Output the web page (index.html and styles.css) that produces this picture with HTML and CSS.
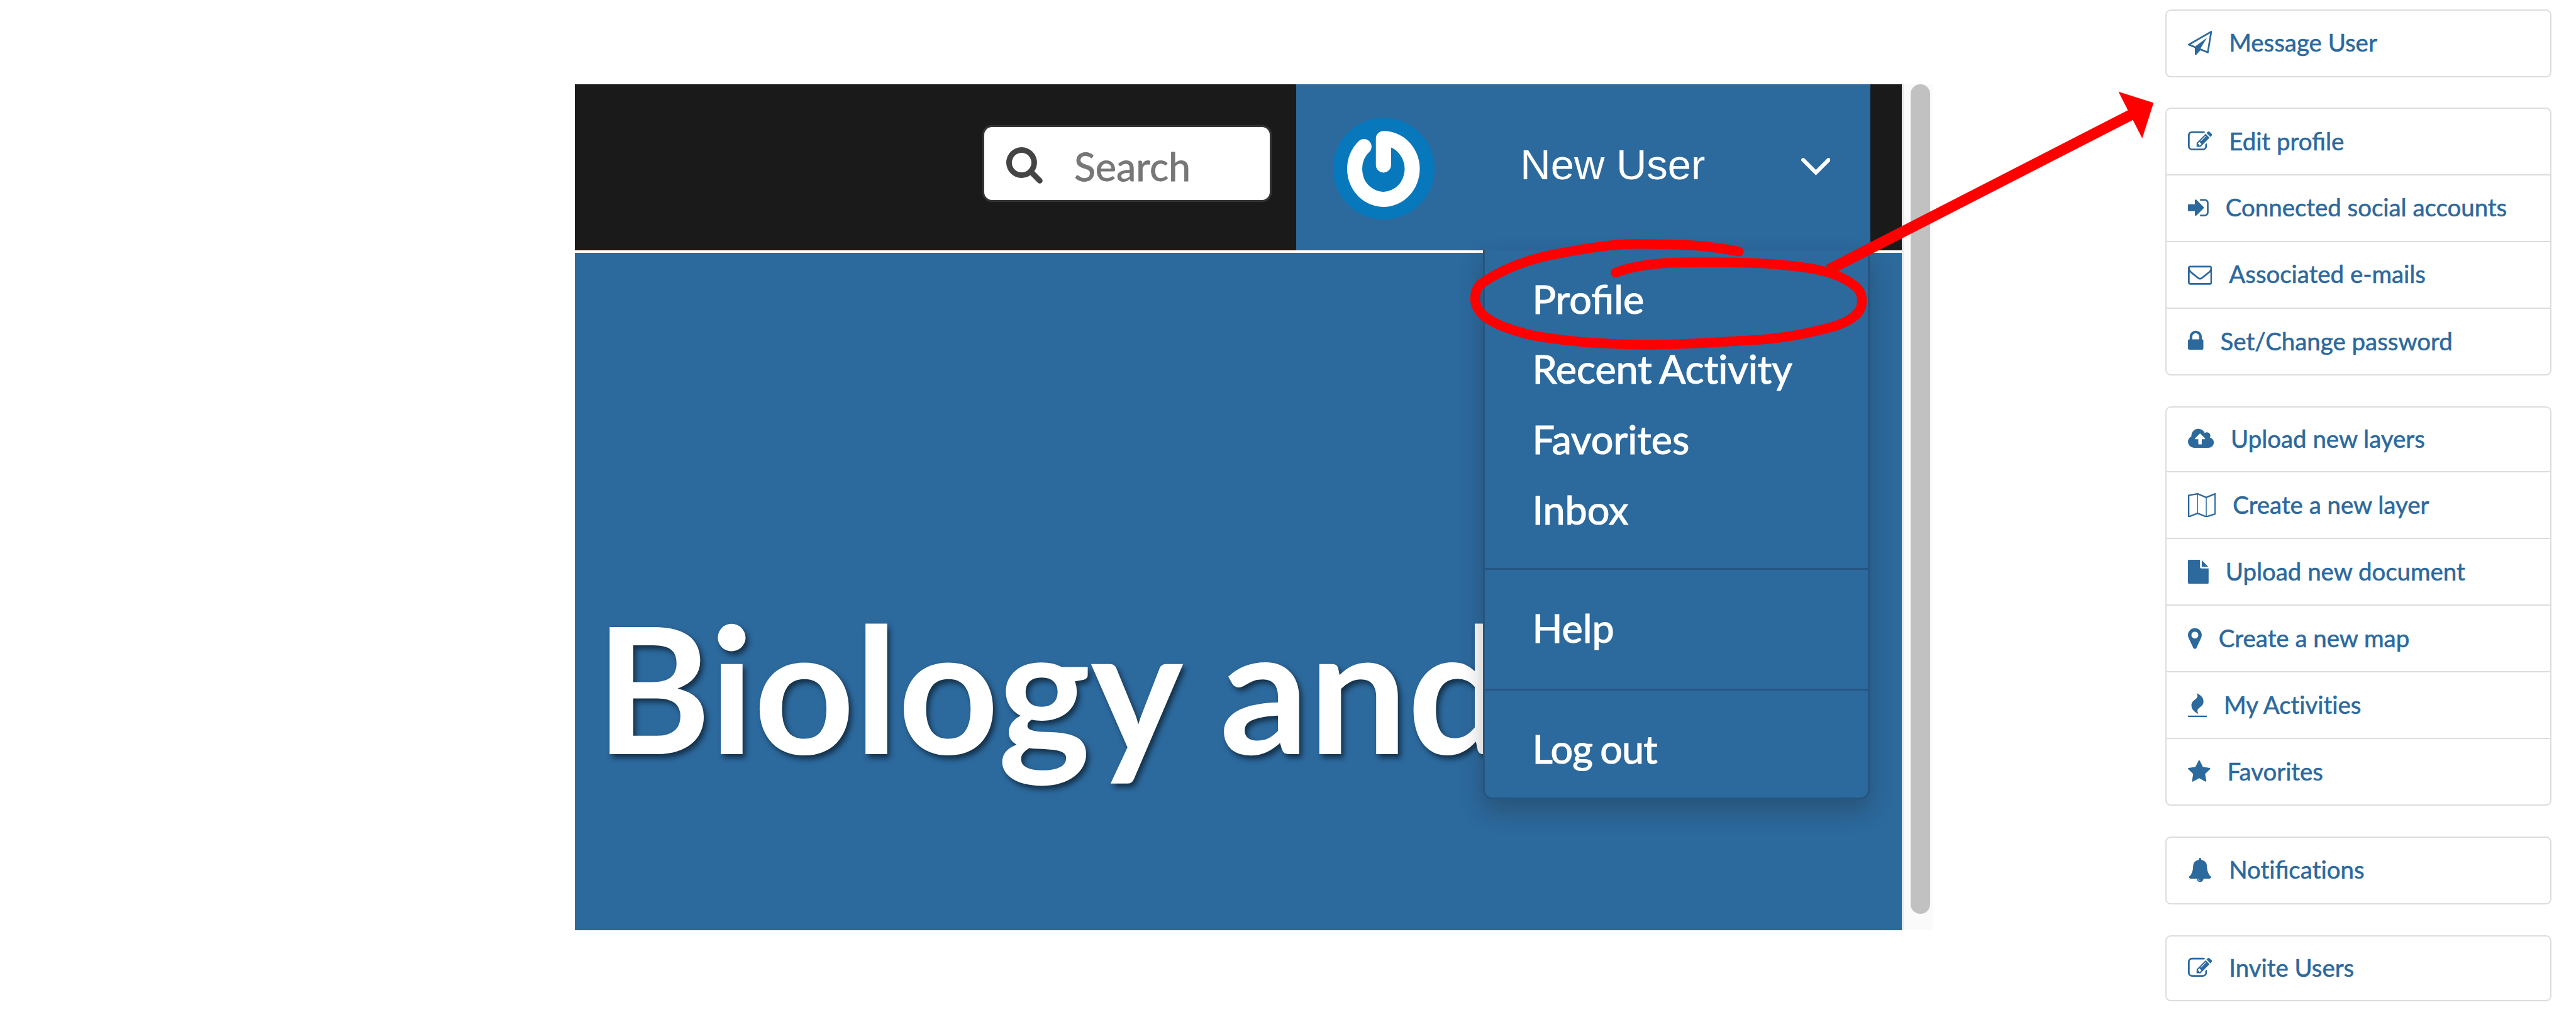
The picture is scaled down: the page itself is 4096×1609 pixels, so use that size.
FILE: index.html
```html
<!DOCTYPE html>
<html lang="en">
<head>
<meta charset="utf-8">
<title>User profile menu</title>
<link rel="stylesheet" href="styles.css">
</head>
<body>
<svg class="sprite" aria-hidden="true">
  <symbol id="send-o" viewBox="0 0 1792 1792"><path d="M1764 11q33 24 27 64l-256 1536q-5 29-32 45-14 8-31 8-11 0-24-5l-527-215-298 327q-18 21-47 21-14 0-23-4-19-7-30-23.500t-11-36.500v-452l-472-193q-37-14-40-55-3-39 32-59l1664-960q35-21 68 2zm-342 1499l221-1323-1434 827 336 137 863-639-478 797z"/></symbol>
  <symbol id="edit" viewBox="0 0 1792 1792"><path d="M888 1184l116-116-152-152-116 116v56h96v96h56zm440-720q-16-16-33 1l-350 350q-17 17-1 33t33-1l350-350q17-17 1-33zm80 594v190q0 119-84.500 203.500t-203.500 84.500h-832q-119 0-203.500-84.500t-84.500-203.500v-832q0-119 84.500-203.500t203.500-84.500h832q63 0 117 25 15 7 18 23 3 17-9 29l-49 49q-14 14-32 8-23-6-45-6h-832q-66 0-113 47t-47 113v832q0 66 47 113t113 47h832q66 0 113-47t47-113v-126q0-13 9-22l64-64q15-15 35-7t20 29zm-96-738l288 288-672 672h-288v-288zm444 132l-92 92-288-288 92-92q28-28 68-28t68 28l152 152q28 28 28 68t-28 68z"/></symbol>
  <symbol id="sign-in" viewBox="128 0 1536 1792"><path d="M1312 896q0 26-19 45l-544 544q-19 19-45 19t-45-19-19-45v-288h-448q-26 0-45-19t-19-45v-384q0-26 19-45t45-19h448v-288q0-26 19-45t45-19 45 19l544 544q19 19 19 45zm352-352v704q0 119-84.500 203.500t-203.500 84.500h-320q-13 0-22.500-9.500t-9.500-22.500q0-4-1-20t-.5-26.500 3-23.500 10-19.500 20.500-6.500h320q66 0 113-47t47-113v-704q0-66-47-113t-113-47h-312l-11.500-1-11.500-3-8-5.500-7-9-2-13.500q0-4-1-20t-.5-26.500 3-23.500 10-19.500 20.500-6.500h320q119 0 203.500 84.500t84.500 203.500z"/></symbol>
  <symbol id="mail" viewBox="0 0 1792 1792"><path d="M1664 1504v-768q-32 36-69 66-268 206-426 338-51 43-83 67t-86.500 48.500-102.500 24.500h-2q-48 0-102.500-24.500t-86.500-48.500-83-67q-158-132-426-338-37-30-69-66v768q0 13 9.500 22.500t22.500 9.500h1472q13 0 22.500-9.500t9.500-22.500zm0-1051v-24.500l-.5-13-3-12.500-5.500-9-9-7.500-14-2.500h-1472q-13 0-22.500 9.500t-9.500 22.500q0 168 147 284 193 152 401 317 6 5 35 29.500t46 37.500 44.500 31.500 50.500 27.500 43 9h2q20 0 43-9t50.500-27.500 44.500-31.500 46-37.500 35-29.500q208-165 401-317 54-43 100.500-115.500t46.500-131.500zm128-37v1088q0 66-47 113t-113 47h-1472q-66 0-113-47t-47-113v-1088q0-66 47-113t113-47h1472q66 0 113 47t47 113z"/></symbol>
  <symbol id="lock" viewBox="320 0 1152 1792"><path d="M640 768h512v-192q0-106-75-181t-181-75-181 75-75 181v192zm832 96v576q0 40-28 68t-68 28h-960q-40 0-68-28t-28-68v-576q0-40 28-68t68-28h32v-192q0-184 132-316t316-132 316 132 132 316v192h32q40 0 68 28t28 68z"/></symbol>
  <symbol id="cloud" viewBox="-64 0 1920 1792"><path d="M1216 864q0-14-9-23l-352-352q-9-9-23-9t-23 9l-351 351q-10 12-10 24 0 14 9 23t23 9h224v352q0 13 9.500 22.500t22.500 9.500h192q13 0 22.500-9.500t9.500-22.500v-352h224q13 0 22.500-9.500t9.500-22.500zm640 288q0 159-112.500 271.500t-271.500 112.500h-1088q-185 0-316.500-131.500t-131.500-316.500q0-130 70-240t188-165q-2-30-2-43 0-212 150-362t362-150q156 0 285.500 87t188.500 231q71-62 166-62 106 0 181 75t75 181q0 76-41 138 130 31 213.500 135.500t83.500 238.500z"/></symbol>
  <symbol id="map" viewBox="0 0 60 52"><g fill="none" stroke="currentColor" stroke-linejoin="round"><path stroke-width="3.200" d="M1.500 4.800 20.800 1.400 39.400 9.200 58.600 1.400V45L39.400 51 20.800 43.500 1.500 51Z"/><path stroke-width="2" d="M20.800 1.400V43.500M39.400 9.200V51"/></g></symbol>
  <symbol id="file" viewBox="128 0 1536 1792"><path d="M1152 512v-472q22 14 36 28l408 408q14 14 28 36h-472zm-128 32q0 40 28 68t68 28h544v1056q0 40-28 68t-68 28h-1344q-40 0-68-28t-28-68v-1600q0-40 28-68t68-28h800v544z"/></symbol>
  <symbol id="marker" viewBox="384 0 1024 1792"><path d="M1152 640q0-106-75-181t-181-75-181 75-75 181 75 181 181 75 181-75 75-181zm256 0q0 109-33 179l-364 774q-16 33-47.500 52t-67.500 19-67.500-19-46.500-52l-365-774q-33-70-33-179 0-212 150-362t362-150 362 150 150 362z"/></symbol>
  <symbol id="fire" viewBox="192 0 1408 1792"><path d="M1600 1696v64q0 13-9.500 22.500t-22.500 9.500h-1344q-13 0-22.500-9.500t-9.500-22.500v-64q0-13 9.500-22.500t22.500-9.500h1344q13 0 22.500 9.500t9.500 22.500zm-256-1056q0 78-24.500 144t-64 112.500-87.500 88-96 77.500-87.500 72-64 81.500-24.500 96.500q0 96 67 224l-4-1 1 1q-90-41-160-83t-138.500-100-113.500-122.500-72.500-150.500-27.500-184q0-78 24.500-144t64-112.500 87.500-88 96-77.500 87.500-72 64-81.500 24.500-96.500q0-94-66-224l3 1-1-1q90 41 160 83t138.500 100 113.500 122.500 72.500 150.500 27.500 184z"/></symbol>
  <symbol id="star" viewBox="64 0 1664 1792"><path d="M1728 647q0 22-26 48l-363 354 86 500q1 7 1 20 0 21-10.500 35.500t-30.500 14.500q-19 0-40-12l-449-236-449 236q-22 12-40 12-21 0-31.500-14.500t-10.500-35.500q0-6 2-20l86-500-364-354q-25-27-25-48 0-37 56-46l502-73 225-455q19-41 49-41t49 41l225 455 502 73q56 9 56 46z"/></symbol>
  <symbol id="bell" viewBox="0 0 1792 1792"><path d="M912 1696q0-16-16-16-59 0-101.500-42.500t-42.500-101.500q0-16-16-16t-16 16q0 73 51.500 124.500t124.500 51.500q16 0 16-16zm816-288q0 52-38 90t-90 38h-448q0 106-75 181t-181 75-181-75-75-181h-448q-52 0-90-38t-38-90q50-42 91-88t85-119.500 74.500-158.500 50-206 19.500-260q0-152 117-282.500t307-158.500q-8-19-8-39 0-40 28-68t68-28 68 28 28 68q0 20-8 39 190 28 307 158.500t117 282.500q0 139 19.500 260t50 206 74.500 158.500 85 119.500 91 88z"/></symbol>
</svg>

<div class="page">
  <section class="window">
    <header class="topbar">
      <label class="search">
        <svg class="search-icon" viewBox="64 128 1664 1664"><path d="M1216 832q0-185-131.500-316.500t-316.500-131.500-316.500 131.500-131.500 316.500 131.500 316.500 316.500 131.500 316.500-131.500 131.500-316.500zm512 832q0 52-38 90t-90 38q-54 0-90-38l-343-342q-179 124-399 124-143 0-273.500-55.500t-225-150-150-225-55.500-273.500 55.500-273.500 150-225 225-150 273.500-55.500 273.500 55.500 225 150 150 225 55.500 273.500q0 220-124 399l343 343q37 37 37 90z"/></svg>
        <span class="search-text">Search</span>
      </label>
      <div class="account">
        <svg class="avatar" viewBox="0 0 222 222">
          <circle cx="111" cy="111" r="110.500" fill="#0878bd"/>
          <path fill="none" stroke="#fff" stroke-width="33" stroke-linecap="round" stroke-linejoin="round" d="M110.500 103V45.500A62.500 66 0 1 1 68 63"/>
        </svg>
        <span class="account-name">New User</span>
        <svg class="chevron" viewBox="0 0 64 38"><path fill="none" stroke="#fff" stroke-width="8.500" stroke-linecap="round" d="M4.500 4.500 32 32 59.500 4.500"/></svg>
        <nav class="menu">
          <div class="menu-group">
            <a>Profile</a>
            <a class="split">Recent Activity</a>
            <a>Favorites</a>
            <a>Inbox</a>
          </div>
          <div class="menu-group"><a>Help</a></div>
          <div class="menu-group"><a class="tight">Log out</a></div>
        </nav>
      </div>
    </header>
    <div class="hero"><h1 class="hero-title">Biology and</h1></div>
  </section>
  <div class="scrollbar"><div class="thumb"></div></div>

  <aside class="actions">
    <div class="card">
      <a class="row"><svg class="icon"><use href="#send-o"/></svg><span>Message User</span></a>
    </div>
    <div class="card">
      <a class="row"><svg class="icon"><use href="#edit"/></svg><span>Edit profile</span></a>
      <a class="row"><svg class="icon w-file"><use href="#sign-in"/></svg><span>Connected social accounts</span></a>
      <a class="row"><svg class="icon"><use href="#mail"/></svg><span>Associated e-mails</span></a>
      <a class="row"><svg class="icon w-lock"><use href="#lock"/></svg><span>Set/Change password</span></a>
    </div>
    <div class="card">
      <a class="row row-first"><svg class="icon w-cloud"><use href="#cloud"/></svg><span>Upload new layers</span></a>
      <a class="row"><svg class="icon w-map"><use href="#map"/></svg><span>Create a new layer</span></a>
      <a class="row"><svg class="icon w-file"><use href="#file"/></svg><span>Upload new document</span></a>
      <a class="row"><svg class="icon w-marker"><use href="#marker"/></svg><span>Create a new map</span></a>
      <a class="row"><svg class="icon w-fire"><use href="#fire"/></svg><span class="split">My Activities</span></a>
      <a class="row"><svg class="icon w-star"><use href="#star"/></svg><span>Favorites</span></a>
    </div>
    <div class="card">
      <a class="row"><svg class="icon"><use href="#bell"/></svg><span><span class="split">Noti</span>fica<span class="split">tions</span></span></a>
    </div>
    <div class="card">
      <a class="row row-first"><svg class="icon"><use href="#edit"/></svg><span>Invite Users</span></a>
    </div>
  </aside>

  <svg class="annotation" viewBox="0 0 5600 2200">
    <path fill="none" stroke="#f00" stroke-width="21" stroke-linecap="round" stroke-linejoin="round" d="M3780 546.700C3740 539 3710 534.500 3665 532.500 3620 531 3580 530 3545 530.500 3500 531 3440 542 3385 551.500 3320 564 3262 587 3219.500 617 3211 625 3206.700 637 3206.700 648.500 3206.700 690 3262 712 3326.700 728 3393 741 3485 749 3590 749.300 3680 749 3760 742 3830 738 3885 734 3930 725 3985 710 4018 700 4047.700 684 4047.700 655 4047.700 642 4043 631 4036.500 625 3995 588 3930 581 3870 575.500 3800 569 3736 569 3660 570.500 3600 571 3550 578 3512 592.700"/>
    <path fill="none" stroke="#f00" stroke-width="23.700" d="M3975 586.500 4640 245.700"/>
    <path fill="#f00" d="M4681.700 223.700 4605.300 199.300 4657 300.700Z"/>
  </svg>
</div>
</body>
</html>
```
FILE: styles.css
```css
/* 1rem is one hundred design units on a 56 x 22 canvas */
html {
  font-size: 73.143px;
}

body {
  margin: 0;
  background: #fff;
  font-family: Lato, "Liberation Sans", sans-serif;
  overflow: hidden;
}

.sprite {
  display: none;
}

/* keeps the letters "ti" apart */
.split {
  font-variant-ligatures: none;
}

.page {
  position: relative;
  display: flex;
  align-items: flex-start;
  width: 56rem;
  height: 22rem;
  box-sizing: border-box;
  padding-left: 12.5rem;
  overflow: hidden;
}

.window {
  display: flex;
  flex-direction: column;
  width: 28.84rem;
  height: 18.39rem;
  margin-top: 1.833rem;
  overflow: hidden;
  background: #2c699d;
}

.topbar {
  display: flex;
  align-items: stretch;
  justify-content: flex-end;
  height: 3.615rem;
  padding-right: 0.686rem;
  background: #1a1a1a;
  border-bottom: 0.055rem solid #fff;
}

.search {
  display: flex;
  align-items: center;
  box-sizing: border-box;
  width: 6.22rem;
  height: 1.58rem;
  margin: 0.934rem 0.57rem 0 0;
  padding-left: 0.49rem;
  background: #fff;
  border-radius: 0.17rem;
  box-shadow: 0 0 0 0.045rem #333;
}

.search-icon {
  width: 0.79rem;
  height: 0.79rem;
  margin-top: 0.07rem;
  fill: #444;
}

.search-text {
  margin: 0.1rem 0 0 0.68rem;
  font-size: 0.86rem;
  line-height: 1.2;
  color: #777;
  -webkit-text-stroke: 0.012rem #777;
}

.account {
  position: relative;
  display: flex;
  align-items: center;
  box-sizing: border-box;
  width: 12.474rem;
  padding-left: 0.79rem;
  background: #2c699d;
}

.avatar {
  width: 2.22rem;
  height: 2.22rem;
  margin-top: 0.04rem;
}

.account-name {
  width: 4.1rem;
  margin: -0.1rem 0 0 1.86rem;
  font: 0.916rem/1.2 "Liberation Sans", Arial, sans-serif;
  color: #fff;
  white-space: nowrap;
}

.chevron {
  width: 0.64rem;
  height: 0.38rem;
  margin-left: 2rem;
  margin-top: -0.03rem;
}

.menu {
  position: absolute;
  top: 3.615rem;
  right: 0.005rem;
  width: 8.41rem;
  height: 11.93rem;
  box-sizing: border-box;
  border: solid #255581;
  border-width: 0 0.045rem 0.045rem;
  border-radius: 0 0 0.2rem 0.2rem;
  background: #2c699d;
  box-shadow: 0 0.24rem 0.5rem rgba(34, 36, 38, 0.3);
}

.menu-group {
  box-sizing: border-box;
  height: 2.63rem;
  padding: 0.495rem 0 0 1.03rem;
}

.menu-group:first-child {
  height: 6.895rem;
  padding-top: 0.275rem;
}

.menu-group + .menu-group {
  border-top: 0.045rem solid #255581;
}

.menu-group a {
  display: block;
  height: 1.527rem;
  font-size: 0.86rem;
  line-height: 1.527rem;
  word-spacing: -0.04rem;
  color: #fff;
  -webkit-text-stroke: 0.016rem #fff;
}

.menu-group .tight {
  letter-spacing: -0.012rem;
}

.hero-title {
  margin: 7.51rem 0 0 0.445rem;
  font-size: 3.82rem;
  font-weight: 700;
  line-height: 1;
  letter-spacing: -0.005rem;
  word-spacing: -0.03rem;
  color: #fff;
  white-space: nowrap;
  text-shadow: 0.06rem 0.08rem 0.12rem rgba(0, 0, 0, 0.55);
}

.scrollbar {
  display: flex;
  box-sizing: border-box;
  width: 0.68rem;
  height: 18.39rem;
  margin-top: 1.833rem;
  padding-left: 0.16rem;
  background: #fafafa;
  border-left: 0.05rem solid #e8e8ea;
}

.thumb {
  width: 0.42rem;
  height: 18.03rem;
  border-radius: 0.21rem;
  background: #c1c1c1;
}

.actions {
  display: flex;
  flex-direction: column;
  gap: 0.668rem;
  width: 8.4rem;
  margin-left: 5.05rem;
  padding-top: 0.208rem;
}

.card {
  box-sizing: border-box;
  border: 0.03rem solid #ddd;
  border-radius: 0.12rem;
  background: #fff;
}

.row {
  display: flex;
  align-items: center;
  gap: 0.365rem;
  box-sizing: border-box;
  height: 1.414rem;
  padding: 0 0 0.04rem 0.47rem;
  font-size: 0.525rem;
  line-height: 1.2;
  color: #2c699d;
  white-space: nowrap;
  -webkit-text-stroke: 0.008rem #2c699d;
}

.row-first {
  height: 1.384rem;
}

.row + .row {
  height: 1.45rem;
  border-top: 0.03rem solid #ddd;
}

.icon {
  width: 0.525rem;
  height: 0.525rem;
  margin-top: 0.03rem;
  fill: currentColor;
}

.w-file { width: 0.45rem; }
.w-lock { width: 0.338rem; }
.w-cloud { width: 0.562rem; }
.w-map { width: 0.605rem; }
.w-marker { width: 0.3rem; }
.w-fire { width: 0.413rem; }
.w-star { width: 0.487rem; }

.annotation {
  position: absolute;
  top: 0;
  left: 0;
  width: 56rem;
  height: 22rem;
  pointer-events: none;
}
```
